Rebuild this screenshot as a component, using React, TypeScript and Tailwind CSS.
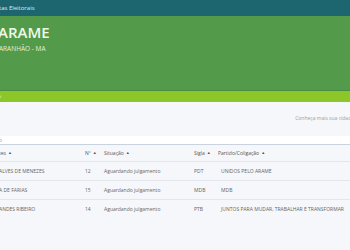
import React from "react";

const rows = [
  { name: "ALVES DE MENEZES", num: "12", sigla: "PDT", partido: "UNIDOS PELO ARAME" },
  { name: "A DE FARIAS", num: "15", sigla: "MDB", partido: "MDB" },
  { name: "ANDES RIBEIRO", num: "14", sigla: "PTB", partido: "JUNTOS PARA MUDAR, TRABALHAR E TRANSFORMAR" },
];

function SortArrow() {
  return <span className="ml-[2px] text-[4px] align-middle">▲</span>;
}

export default function App() {
  return (
    <div
      className="w-[350px] h-[250px] overflow-hidden bg-[#f5f7fa] flex flex-col"
      style={{ fontFamily: "'Open Sans', 'Liberation Sans', sans-serif" }}
    >
      {/* Top bar */}
      <header className="h-[16px] bg-[#1d6670] flex items-center">
        <span className="text-[6px] text-[#dfeef0] leading-none -ml-[1px]">tas Eleitorais</span>
      </header>

      {/* Title band */}
      <section className="h-[75px] bg-[#549a4b] pt-[7px] border-b border-[#4a8c40]">
        <h1 className="text-[15px] font-semibold text-[#effbe6] leading-none -ml-[2px] pt-[2px]">ARAME</h1>
        <p className="text-[6.5px] text-[#e2f0d9] leading-none mt-[6px] -ml-[1px]">ARANHÃO - MA</p>
      </section>

      {/* Lime bar */}
      <div className="h-[11px] bg-[#8dc629] flex items-center">
        <span className="text-[4px] text-white leading-none">i</span>
      </div>

      {/* Info strip */}
      <div className="h-[34px] flex items-center justify-end pr-0">
        <span className="text-[5px] text-[#9aa0a6] whitespace-nowrap -mr-[4px]">Conheça mais sua cidade</span>
      </div>

      {/* Search */}
      <div className="h-[9px] bg-white border-b border-[#c9d3df] flex items-center">
        <span className="text-[5px] text-[#9aa0a6] leading-none -ml-[1px]">o</span>
      </div>

      {/* Table */}
      <div className="text-[5px] text-[#666] leading-none">
        <div className="h-[17px] flex items-center border-b border-[#e3e7ec] text-[#555]">
          <div className="w-[86px] -ml-[1px]">
            tes
            <SortArrow />
          </div>
          <div className="w-[19px]">
            Nº
            <SortArrow />
          </div>
          <div className="w-[90px]">
            Situação
            <SortArrow />
          </div>
          <div className="w-[24px]">
            Sigla
            <SortArrow />
          </div>
          <div className="flex-1">
            Partido/Coligação
            <SortArrow />
          </div>
        </div>
        {rows.map((r, i) => (
          <div
            key={r.num}
            className={`h-[19px] flex items-center ${i < rows.length - 1 ? "border-b border-[#e3e7ec]" : ""}`}
          >
            <div className="w-[86px] -ml-[1px] whitespace-nowrap">{r.name}</div>
            <div className="w-[19px]">{r.num}</div>
            <div className="w-[90px]">Aguardando julgamento</div>
            <div className="w-[27px]">{r.sigla}</div>
            <div className="flex-1 whitespace-nowrap">{r.partido}</div>
          </div>
        ))}
      </div>
    </div>
  );
}
